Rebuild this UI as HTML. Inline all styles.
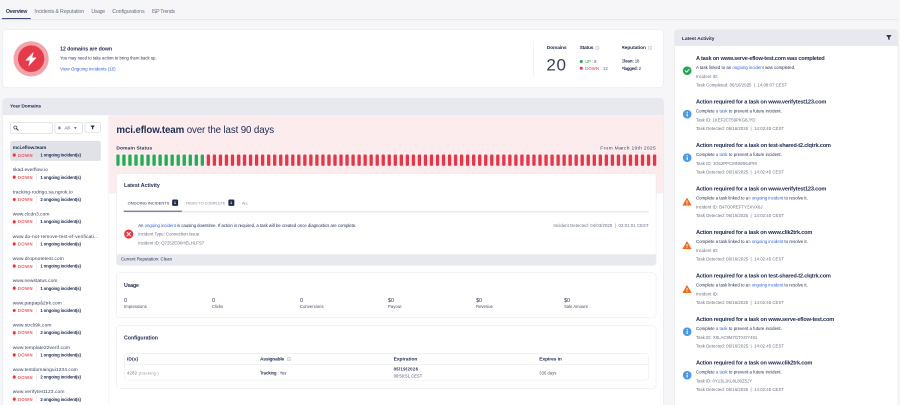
<!DOCTYPE html>
<html><head><meta charset="utf-8"><title>Domains Overview</title>
<style>
html,body{margin:0;padding:0;}
body{width:900px;height:405px;overflow:hidden;background:#f6f6f9;font-family:"Liberation Sans",sans-serif;}
#outer{position:absolute;left:-14px;top:-112px;width:1828px;height:1034px;transform:scale(0.5);transform-origin:0 0;will-change:transform;overflow:hidden;background:#f6f6f9;}
#root{position:absolute;left:28px;top:224px;width:2400px;height:1080px;transform:scale(0.75);transform-origin:0 0;overflow:hidden;background:#f6f6f9;}
.t{position:absolute;white-space:nowrap;}
.t b{font-weight:700;}
a{color:#2f5fd3;text-decoration:none;}
</style></head><body><div id="outer"><div id="root">
<div style="position:absolute;left:0.00px;top:50.80px;width:2394.00px;height:1.50px;background:#cfd2dc"></div>
<div style="position:absolute;left:5.30px;top:47.80px;width:76.70px;height:3.70px;background:#46547a"></div>
<div style="position:absolute;left:6.70px;top:78.30px;width:1762.50px;height:155.50px;background:#fff;border:1.4px solid #dcdee5;border-radius:9px;box-sizing:border-box"></div>
<div style="position:absolute;left:35.80px;top:109.50px;width:94.00px;height:94.00px;background:#f3a3aa;border-radius:50%"></div>
<div style="position:absolute;left:47.50px;top:121.20px;width:70.60px;height:70.60px;background:#e43c4a;border-radius:50%"></div>
<svg style="position:absolute;left:62.8px;top:134.5px" width="40" height="44" viewBox="-20 -22 40 44"><path d="M5.5 -16.5 L-14 3.6 L-2.4 3.6 L-6.5 18 L13 -2.8 L1.8 -2.8 Z" fill="#fff" stroke="#fff" stroke-width="1.5" stroke-linejoin="round"/></svg>
<div style="position:absolute;left:1422.70px;top:110.00px;width:1.00px;height:93.00px;background:#dcdde3"></div>
<svg style="position:absolute;left:1587.0px;top:121.8px" width="11.5" height="11.5" viewBox="0 0 12 12"><circle cx="6" cy="6" r="5.2" fill="none" stroke="#9fa4b3" stroke-width="1.3"/><rect x="5.4" y="5.2" width="1.2" height="3.6" fill="#9fa4b3"/><rect x="5.4" y="3" width="1.2" height="1.3" fill="#9fa4b3"/></svg>
<svg style="position:absolute;left:1727.5px;top:121.8px" width="11.5" height="11.5" viewBox="0 0 12 12"><circle cx="6" cy="6" r="5.2" fill="none" stroke="#9fa4b3" stroke-width="1.3"/><rect x="5.4" y="5.2" width="1.2" height="3.6" fill="#9fa4b3"/><rect x="5.4" y="3" width="1.2" height="1.3" fill="#9fa4b3"/></svg>
<div style="position:absolute;left:1545.90px;top:160.00px;width:8.00px;height:8.00px;background:#22a652;border-radius:50%"></div>
<div style="position:absolute;left:1545.90px;top:178.40px;width:8.00px;height:8.00px;background:#e5383f;border-radius:50%"></div>
<div style="position:absolute;left:6.70px;top:261.60px;width:1763.00px;height:900.00px;background:#fff;border:1.4px solid #d6d8e0;border-radius:9px;box-sizing:border-box;overflow:hidden"></div>
<div style="position:absolute;left:7.7px;top:262.6px;width:1761px;height:44px;background:#e8e9ee;border-radius:8px 8px 0 0"></div>
<div style="position:absolute;left:290.40px;top:306.60px;width:1478.50px;height:209.90px;background:#fcecee"></div>
<div style="position:absolute;left:288.50px;top:306.60px;width:1.50px;height:800.00px;background:#e9eaef"></div>
<div style="position:absolute;left:27.00px;top:326.00px;width:114.00px;height:29.70px;background:#fff;border:1.3px solid #b6bbc8;border-radius:5px;box-sizing:border-box"></div>
<svg style="position:absolute;left:35px;top:333.5px" width="15" height="15" viewBox="0 0 15 15"><circle cx="6" cy="6" r="4.2" fill="none" stroke="#2a3553" stroke-width="1.7"/><path d="M9 9 L13.5 13.5" stroke="#2a3553" stroke-width="2.4" stroke-linecap="round"/></svg>
<div style="position:absolute;left:146.00px;top:326.00px;width:75.30px;height:29.70px;background:#fff;border:1.3px solid #b6bbc8;border-radius:5px;box-sizing:border-box"></div>
<div style="position:absolute;left:155.00px;top:337.30px;width:7.40px;height:7.40px;background:#8d92a3;border-radius:50%"></div>
<svg style="position:absolute;left:197px;top:338.5px" width="8" height="5" viewBox="0 0 8 5"><path d="M0 0 L8 0 L4 5 Z" fill="#4a5470"/></svg>
<div style="position:absolute;left:226.00px;top:326.00px;width:42.80px;height:26.80px;background:#fff;border:1.3px solid #b6bbc8;border-radius:5px;box-sizing:border-box"></div>
<svg style="position:absolute;left:241.2px;top:333.5px" width="12" height="12" viewBox="0 0 12 12"><path d="M0.4 0.6 L11.6 0.6 L11.6 1.5 L7.5 5.8 L7.5 11.6 L4.5 9.6 L4.5 5.8 L0.4 1.5 Z" fill="#1f2a4a"/></svg>
<div style="position:absolute;left:27.00px;top:376.30px;width:242.00px;height:52.80px;background:#e0e2e8;border-radius:6px"></div>
<div style="position:absolute;left:33.50px;top:409.20px;width:8.80px;height:8.80px;background:#e5383f;border-radius:50%"></div>
<div style="position:absolute;left:97.00px;top:404.60px;width:1.00px;height:18.00px;background:#d3d5dd"></div>
<div style="position:absolute;left:33.50px;top:468.40px;width:8.80px;height:8.80px;background:#e5383f;border-radius:50%"></div>
<div style="position:absolute;left:97.00px;top:463.80px;width:1.00px;height:18.00px;background:#d3d5dd"></div>
<div style="position:absolute;left:33.50px;top:527.60px;width:8.80px;height:8.80px;background:#e5383f;border-radius:50%"></div>
<div style="position:absolute;left:97.00px;top:523.00px;width:1.00px;height:18.00px;background:#d3d5dd"></div>
<div style="position:absolute;left:33.50px;top:586.80px;width:8.80px;height:8.80px;background:#e5383f;border-radius:50%"></div>
<div style="position:absolute;left:97.00px;top:582.20px;width:1.00px;height:18.00px;background:#d3d5dd"></div>
<div style="position:absolute;left:33.50px;top:646.00px;width:8.80px;height:8.80px;background:#e5383f;border-radius:50%"></div>
<div style="position:absolute;left:97.00px;top:641.40px;width:1.00px;height:18.00px;background:#d3d5dd"></div>
<div style="position:absolute;left:33.50px;top:705.20px;width:8.80px;height:8.80px;background:#e5383f;border-radius:50%"></div>
<div style="position:absolute;left:97.00px;top:700.60px;width:1.00px;height:18.00px;background:#d3d5dd"></div>
<div style="position:absolute;left:33.50px;top:764.40px;width:8.80px;height:8.80px;background:#e5383f;border-radius:50%"></div>
<div style="position:absolute;left:97.00px;top:759.80px;width:1.00px;height:18.00px;background:#d3d5dd"></div>
<div style="position:absolute;left:33.50px;top:823.60px;width:8.80px;height:8.80px;background:#e5383f;border-radius:50%"></div>
<div style="position:absolute;left:97.00px;top:819.00px;width:1.00px;height:18.00px;background:#d3d5dd"></div>
<div style="position:absolute;left:33.50px;top:882.80px;width:8.80px;height:8.80px;background:#e5383f;border-radius:50%"></div>
<div style="position:absolute;left:97.00px;top:878.20px;width:1.00px;height:18.00px;background:#d3d5dd"></div>
<div style="position:absolute;left:33.50px;top:942.00px;width:8.80px;height:8.80px;background:#e5383f;border-radius:50%"></div>
<div style="position:absolute;left:97.00px;top:937.40px;width:1.00px;height:18.00px;background:#d3d5dd"></div>
<div style="position:absolute;left:33.50px;top:1001.20px;width:8.80px;height:8.80px;background:#e5383f;border-radius:50%"></div>
<div style="position:absolute;left:97.00px;top:996.60px;width:1.00px;height:18.00px;background:#d3d5dd"></div>
<div style="position:absolute;left:33.50px;top:1060.40px;width:8.80px;height:8.80px;background:#e5383f;border-radius:50%"></div>
<div style="position:absolute;left:97.00px;top:1055.80px;width:1.00px;height:18.00px;background:#d3d5dd"></div>
<svg style="position:absolute;left:310.4px;top:412.3px" width="1442" height="31"><rect x="0.00" y="0" width="8.9" height="30.3" rx="3.2" fill="#22ad57"/><rect x="16.08" y="0" width="8.9" height="30.3" rx="3.2" fill="#22ad57"/><rect x="32.16" y="0" width="8.9" height="30.3" rx="3.2" fill="#22ad57"/><rect x="48.24" y="0" width="8.9" height="30.3" rx="3.2" fill="#22ad57"/><rect x="64.32" y="0" width="8.9" height="30.3" rx="3.2" fill="#22ad57"/><rect x="80.40" y="0" width="8.9" height="30.3" rx="3.2" fill="#22ad57"/><rect x="96.48" y="0" width="8.9" height="30.3" rx="3.2" fill="#22ad57"/><rect x="112.56" y="0" width="8.9" height="30.3" rx="3.2" fill="#22ad57"/><rect x="128.64" y="0" width="8.9" height="30.3" rx="3.2" fill="#22ad57"/><rect x="144.72" y="0" width="8.9" height="30.3" rx="3.2" fill="#22ad57"/><rect x="160.80" y="0" width="8.9" height="30.3" rx="3.2" fill="#22ad57"/><rect x="176.88" y="0" width="8.9" height="30.3" rx="3.2" fill="#22ad57"/><rect x="192.96" y="0" width="8.9" height="30.3" rx="3.2" fill="#22ad57"/><rect x="209.04" y="0" width="8.9" height="30.3" rx="3.2" fill="#22ad57"/><rect x="225.12" y="0" width="8.9" height="30.3" rx="3.2" fill="#22ad57"/><rect x="241.20" y="0" width="8.9" height="30.3" rx="3.2" fill="#e4374a"/><rect x="257.28" y="0" width="8.9" height="30.3" rx="3.2" fill="#e4374a"/><rect x="273.36" y="0" width="8.9" height="30.3" rx="3.2" fill="#e4374a"/><rect x="289.44" y="0" width="8.9" height="30.3" rx="3.2" fill="#e4374a"/><rect x="305.52" y="0" width="8.9" height="30.3" rx="3.2" fill="#e4374a"/><rect x="321.60" y="0" width="8.9" height="30.3" rx="3.2" fill="#e4374a"/><rect x="337.68" y="0" width="8.9" height="30.3" rx="3.2" fill="#e4374a"/><rect x="353.76" y="0" width="8.9" height="30.3" rx="3.2" fill="#e4374a"/><rect x="369.84" y="0" width="8.9" height="30.3" rx="3.2" fill="#e4374a"/><rect x="385.92" y="0" width="8.9" height="30.3" rx="3.2" fill="#e4374a"/><rect x="402.00" y="0" width="8.9" height="30.3" rx="3.2" fill="#e4374a"/><rect x="418.08" y="0" width="8.9" height="30.3" rx="3.2" fill="#e4374a"/><rect x="434.16" y="0" width="8.9" height="30.3" rx="3.2" fill="#e4374a"/><rect x="450.24" y="0" width="8.9" height="30.3" rx="3.2" fill="#e4374a"/><rect x="466.32" y="0" width="8.9" height="30.3" rx="3.2" fill="#e4374a"/><rect x="482.40" y="0" width="8.9" height="30.3" rx="3.2" fill="#e4374a"/><rect x="498.48" y="0" width="8.9" height="30.3" rx="3.2" fill="#e4374a"/><rect x="514.56" y="0" width="8.9" height="30.3" rx="3.2" fill="#e4374a"/><rect x="530.64" y="0" width="8.9" height="30.3" rx="3.2" fill="#e4374a"/><rect x="546.72" y="0" width="8.9" height="30.3" rx="3.2" fill="#e4374a"/><rect x="562.80" y="0" width="8.9" height="30.3" rx="3.2" fill="#e4374a"/><rect x="578.88" y="0" width="8.9" height="30.3" rx="3.2" fill="#e4374a"/><rect x="594.96" y="0" width="8.9" height="30.3" rx="3.2" fill="#e4374a"/><rect x="611.04" y="0" width="8.9" height="30.3" rx="3.2" fill="#e4374a"/><rect x="627.12" y="0" width="8.9" height="30.3" rx="3.2" fill="#e4374a"/><rect x="643.20" y="0" width="8.9" height="30.3" rx="3.2" fill="#e4374a"/><rect x="659.28" y="0" width="8.9" height="30.3" rx="3.2" fill="#e4374a"/><rect x="675.36" y="0" width="8.9" height="30.3" rx="3.2" fill="#e4374a"/><rect x="691.44" y="0" width="8.9" height="30.3" rx="3.2" fill="#e4374a"/><rect x="707.52" y="0" width="8.9" height="30.3" rx="3.2" fill="#e4374a"/><rect x="723.60" y="0" width="8.9" height="30.3" rx="3.2" fill="#e4374a"/><rect x="739.68" y="0" width="8.9" height="30.3" rx="3.2" fill="#e4374a"/><rect x="755.76" y="0" width="8.9" height="30.3" rx="3.2" fill="#e4374a"/><rect x="771.84" y="0" width="8.9" height="30.3" rx="3.2" fill="#e4374a"/><rect x="787.92" y="0" width="8.9" height="30.3" rx="3.2" fill="#e4374a"/><rect x="804.00" y="0" width="8.9" height="30.3" rx="3.2" fill="#e4374a"/><rect x="820.08" y="0" width="8.9" height="30.3" rx="3.2" fill="#e4374a"/><rect x="836.16" y="0" width="8.9" height="30.3" rx="3.2" fill="#e4374a"/><rect x="852.24" y="0" width="8.9" height="30.3" rx="3.2" fill="#e4374a"/><rect x="868.32" y="0" width="8.9" height="30.3" rx="3.2" fill="#e4374a"/><rect x="884.40" y="0" width="8.9" height="30.3" rx="3.2" fill="#e4374a"/><rect x="900.48" y="0" width="8.9" height="30.3" rx="3.2" fill="#e4374a"/><rect x="916.56" y="0" width="8.9" height="30.3" rx="3.2" fill="#e4374a"/><rect x="932.64" y="0" width="8.9" height="30.3" rx="3.2" fill="#e4374a"/><rect x="948.72" y="0" width="8.9" height="30.3" rx="3.2" fill="#e4374a"/><rect x="964.80" y="0" width="8.9" height="30.3" rx="3.2" fill="#e4374a"/><rect x="980.88" y="0" width="8.9" height="30.3" rx="3.2" fill="#e4374a"/><rect x="996.96" y="0" width="8.9" height="30.3" rx="3.2" fill="#e4374a"/><rect x="1013.04" y="0" width="8.9" height="30.3" rx="3.2" fill="#e4374a"/><rect x="1029.12" y="0" width="8.9" height="30.3" rx="3.2" fill="#e4374a"/><rect x="1045.20" y="0" width="8.9" height="30.3" rx="3.2" fill="#e4374a"/><rect x="1061.28" y="0" width="8.9" height="30.3" rx="3.2" fill="#e4374a"/><rect x="1077.36" y="0" width="8.9" height="30.3" rx="3.2" fill="#e4374a"/><rect x="1093.44" y="0" width="8.9" height="30.3" rx="3.2" fill="#e4374a"/><rect x="1109.52" y="0" width="8.9" height="30.3" rx="3.2" fill="#e4374a"/><rect x="1125.60" y="0" width="8.9" height="30.3" rx="3.2" fill="#e4374a"/><rect x="1141.68" y="0" width="8.9" height="30.3" rx="3.2" fill="#e4374a"/><rect x="1157.76" y="0" width="8.9" height="30.3" rx="3.2" fill="#e4374a"/><rect x="1173.84" y="0" width="8.9" height="30.3" rx="3.2" fill="#e4374a"/><rect x="1189.92" y="0" width="8.9" height="30.3" rx="3.2" fill="#e4374a"/><rect x="1206.00" y="0" width="8.9" height="30.3" rx="3.2" fill="#e4374a"/><rect x="1222.08" y="0" width="8.9" height="30.3" rx="3.2" fill="#e4374a"/><rect x="1238.16" y="0" width="8.9" height="30.3" rx="3.2" fill="#e4374a"/><rect x="1254.24" y="0" width="8.9" height="30.3" rx="3.2" fill="#e4374a"/><rect x="1270.32" y="0" width="8.9" height="30.3" rx="3.2" fill="#e4374a"/><rect x="1286.40" y="0" width="8.9" height="30.3" rx="3.2" fill="#e4374a"/><rect x="1302.48" y="0" width="8.9" height="30.3" rx="3.2" fill="#e4374a"/><rect x="1318.56" y="0" width="8.9" height="30.3" rx="3.2" fill="#e4374a"/><rect x="1334.64" y="0" width="8.9" height="30.3" rx="3.2" fill="#e4374a"/><rect x="1350.72" y="0" width="8.9" height="30.3" rx="3.2" fill="#e4374a"/><rect x="1366.80" y="0" width="8.9" height="30.3" rx="3.2" fill="#e4374a"/><rect x="1382.88" y="0" width="8.9" height="30.3" rx="3.2" fill="#e4374a"/><rect x="1398.96" y="0" width="8.9" height="30.3" rx="3.2" fill="#e4374a"/><rect x="1415.04" y="0" width="8.9" height="30.3" rx="3.2" fill="#e4374a"/><rect x="1431.12" y="0" width="8.9" height="30.3" rx="3.2" fill="#e4374a"/></svg>
<div style="position:absolute;left:310.40px;top:461.90px;width:1439.20px;height:245.80px;background:#fff;border:1.4px solid #dcdee5;border-radius:8px;box-sizing:border-box;overflow:hidden"></div>
<div style="position:absolute;left:311.40px;top:678.40px;width:1437.20px;height:28.30px;background:#e8e9ee;border-radius:0 0 7px 7px"></div>
<div style="position:absolute;left:458.70px;top:531.60px;width:16.00px;height:17.00px;background:#1f2d50;border-radius:3.5px"></div>
<div style="position:absolute;left:608.50px;top:531.60px;width:16.00px;height:17.00px;background:#1f2d50;border-radius:3.5px"></div>
<div style="position:absolute;left:329.60px;top:564.00px;width:1400.00px;height:1.60px;background:#cfd2dc"></div>
<div style="position:absolute;left:329.60px;top:561.60px;width:155.70px;height:2.80px;background:#2a3553"></div>
<svg style="position:absolute;left:331.2px;top:612.3px" width="24.4" height="24.4" viewBox="0 0 23 23"><circle cx="11.5" cy="11.5" r="11.5" fill="#e5383f"/><path d="M7.3 7.3 L15.7 15.7 M15.7 7.3 L7.3 15.7" stroke="#fff" stroke-width="2.6" stroke-linecap="round"/></svg>
<div style="position:absolute;left:310.40px;top:726.70px;width:1439.20px;height:121.00px;background:#fff;border:1.4px solid #dcdee5;border-radius:8px;box-sizing:border-box;overflow:hidden"></div>
<div style="position:absolute;left:310.40px;top:868.30px;width:1439.20px;height:167.40px;background:#fff;border:1.4px solid #dcdee5;border-radius:8px;box-sizing:border-box;overflow:hidden"></div>
<div style="position:absolute;left:330.70px;top:942.40px;width:1398.60px;height:72.00px;background:#fff;border:1.4px solid #dcdee5;border-radius:7px;box-sizing:border-box"></div>
<div style="position:absolute;left:331.70px;top:971.20px;width:1396.60px;height:1.00px;background:#dcdee5"></div>
<svg style="position:absolute;left:764.8px;top:951.5px" width="11.5" height="11.5" viewBox="0 0 12 12"><circle cx="6" cy="6" r="5.2" fill="none" stroke="#9fa4b3" stroke-width="1.3"/><rect x="5.4" y="5.2" width="1.2" height="3.6" fill="#9fa4b3"/><rect x="5.4" y="3" width="1.2" height="1.3" fill="#9fa4b3"/></svg>
<div style="position:absolute;left:1798.40px;top:78.70px;width:596.50px;height:1100.00px;background:#fff;border:1.4px solid #d6d8e0;border-radius:9px;box-sizing:border-box"></div>
<div style="position:absolute;left:1799.4px;top:79.7px;width:594.5px;height:43.8px;background:#e8e9ee;border-radius:8px 8px 0 0"></div>
<svg style="position:absolute;left:2363.2px;top:93.3px" width="14.5" height="14.5" viewBox="0 0 12 12"><path d="M0.4 0.6 L11.6 0.6 L11.6 1.5 L7.5 5.8 L7.5 11.6 L4.5 9.6 L4.5 5.8 L0.4 1.5 Z" fill="#1f2a4a"/></svg>
<svg style="position:absolute;left:1820.7px;top:177.1px" width="23" height="23" viewBox="0 0 23 23"><circle cx="11.5" cy="11.5" r="11.5" fill="#22a652"/><path d="M6.5 11.8 L10 15.3 L16.5 8.2" stroke="#fff" stroke-width="2.6" fill="none" stroke-linecap="round" stroke-linejoin="round"/></svg>
<svg style="position:absolute;left:1820.7px;top:293.15000000000003px" width="23" height="23" viewBox="0 0 23 23"><circle cx="11.5" cy="11.5" r="11.5" fill="#4a98e8"/><rect x="10" y="9.8" width="3" height="8" rx="0.8" fill="#fff"/><circle cx="11.5" cy="6.4" r="1.8" fill="#fff"/></svg>
<svg style="position:absolute;left:1820.7px;top:409.20000000000005px" width="23" height="23" viewBox="0 0 23 23"><circle cx="11.5" cy="11.5" r="11.5" fill="#4a98e8"/><rect x="10" y="9.8" width="3" height="8" rx="0.8" fill="#fff"/><circle cx="11.5" cy="6.4" r="1.8" fill="#fff"/></svg>
<svg style="position:absolute;left:1820.2px;top:527.4px" width="24" height="22" viewBox="0 0 25 23"><path d="M12.5 1.8 L23.8 21.3 L1.2 21.3 Z" fill="#f06a1f" stroke="#f06a1f" stroke-width="2.2" stroke-linejoin="round"/><rect x="11.3" y="8" width="2.4" height="7.3" fill="#fff"/><rect x="11.3" y="16.8" width="2.4" height="2.4" fill="#fff"/></svg>
<svg style="position:absolute;left:1820.2px;top:643.4px" width="24" height="22" viewBox="0 0 25 23"><path d="M12.5 1.8 L23.8 21.3 L1.2 21.3 Z" fill="#f06a1f" stroke="#f06a1f" stroke-width="2.2" stroke-linejoin="round"/><rect x="11.3" y="8" width="2.4" height="7.3" fill="#fff"/><rect x="11.3" y="16.8" width="2.4" height="2.4" fill="#fff"/></svg>
<svg style="position:absolute;left:1820.2px;top:759.5px" width="24" height="22" viewBox="0 0 25 23"><path d="M12.5 1.8 L23.8 21.3 L1.2 21.3 Z" fill="#f06a1f" stroke="#f06a1f" stroke-width="2.2" stroke-linejoin="round"/><rect x="11.3" y="8" width="2.4" height="7.3" fill="#fff"/><rect x="11.3" y="16.8" width="2.4" height="2.4" fill="#fff"/></svg>
<svg style="position:absolute;left:1820.7px;top:873.4px" width="23" height="23" viewBox="0 0 23 23"><circle cx="11.5" cy="11.5" r="11.5" fill="#4a98e8"/><rect x="10" y="9.8" width="3" height="8" rx="0.8" fill="#fff"/><circle cx="11.5" cy="6.4" r="1.8" fill="#fff"/></svg>
<svg style="position:absolute;left:1820.7px;top:989.45px" width="23" height="23" viewBox="0 0 23 23"><circle cx="11.5" cy="11.5" r="11.5" fill="#4a98e8"/><rect x="10" y="9.8" width="3" height="8" rx="0.8" fill="#fff"/><circle cx="11.5" cy="6.4" r="1.8" fill="#fff"/></svg>
<div class="t" style="left:15.70px;top:20.60px;font-size:14px;line-height:16.80px;font-weight:700;color:#2a3553;letter-spacing:-0.746px;">Overview</div>
<div class="t" style="left:91.70px;top:20.60px;font-size:14px;line-height:16.80px;font-weight:400;color:#6b7189;letter-spacing:-0.390px;">Incidents &amp; Reputation</div>
<div class="t" style="left:243.70px;top:20.60px;font-size:14px;line-height:16.80px;font-weight:400;color:#6b7189;letter-spacing:-0.934px;">Usage</div>
<div class="t" style="left:299.20px;top:20.60px;font-size:14px;line-height:16.80px;font-weight:400;color:#6b7189;letter-spacing:-0.299px;">Configurations</div>
<div class="t" style="left:404.50px;top:20.60px;font-size:14px;line-height:16.80px;font-weight:400;color:#6b7189;letter-spacing:-0.762px;">ISP Trends</div>
<div class="t" style="left:160.30px;top:122.30px;font-size:14px;line-height:16.80px;font-weight:700;color:#232f54;letter-spacing:-0.209px;">12 domains are down</div>
<div class="t" style="left:160.30px;top:148.90px;font-size:11px;line-height:13.20px;font-weight:400;color:#232f54;letter-spacing:0.146px;">You may need to take action to bring them back up.</div>
<div class="t" style="left:160.30px;top:177.40px;font-size:12px;line-height:14.40px;font-weight:400;color:#2f5fd3;letter-spacing:-0.094px;"><a>View Ongoing Incidents (16)</a></div>
<div class="t" style="left:1458.10px;top:119.30px;font-size:13px;line-height:15.60px;font-weight:700;color:#232f54;letter-spacing:-0.372px;">Domains</div>
<div class="t" style="left:1457.00px;top:146.30px;font-size:45.5px;line-height:54.60px;font-weight:400;color:#36415f;letter-spacing:1.688px;">20</div>
<div class="t" style="left:1545.60px;top:119.30px;font-size:13px;line-height:15.60px;font-weight:700;color:#232f54;letter-spacing:-0.572px;">Status</div>
<div class="t" style="left:1656.50px;top:119.30px;font-size:13px;line-height:15.60px;font-weight:700;color:#232f54;letter-spacing:-0.199px;">Reputation</div>
<div class="t" style="left:1560.50px;top:157.70px;font-size:11.5px;line-height:13.80px;font-weight:400;color:#4a5470;letter-spacing:-0.311px;"><span style="color:#22a652">UP</span> : 8</div>
<div class="t" style="left:1560.50px;top:175.90px;font-size:11.5px;line-height:13.80px;font-weight:400;color:#4a5470;letter-spacing:0.165px;"><span style="color:#e5383f">DOWN</span> : 12</div>
<div class="t" style="left:1656.50px;top:157.10px;font-size:11.5px;line-height:13.80px;font-weight:400;color:#232f54;letter-spacing:-0.317px;"><b>Clean:</b> 18</div>
<div class="t" style="left:1656.50px;top:175.50px;font-size:11.5px;line-height:13.80px;font-weight:400;color:#232f54;letter-spacing:-0.502px;"><b>Flagged:</b> 2</div>
<div class="t" style="left:26.70px;top:275.40px;font-size:13px;line-height:15.60px;font-weight:700;color:#232f54;letter-spacing:-0.381px;">Your Domains</div>
<div class="t" style="left:172.00px;top:334.10px;font-size:12px;line-height:14.40px;font-weight:400;color:#4f566e;letter-spacing:0.085px;">All</div>
<div class="t" style="left:33.90px;top:385.20px;font-size:13px;line-height:15.60px;font-weight:700;color:#232f54;letter-spacing:-0.223px;">mci.eflow.team</div>
<div class="t" style="left:48.00px;top:407.50px;font-size:11px;line-height:13.20px;font-weight:400;color:#e5383f;letter-spacing:1.218px;-webkit-text-stroke:0.25px #e5383f;">DOWN</div>
<div class="t" style="left:107.50px;top:407.40px;font-size:11.5px;line-height:13.80px;font-weight:700;color:#232f54;letter-spacing:-0.394px;">1 ongoing incident(s)</div>
<div class="t" style="left:33.90px;top:444.40px;font-size:13px;line-height:15.60px;font-weight:400;color:#364160;letter-spacing:0.050px;">skad.everflow.io</div>
<div class="t" style="left:48.00px;top:466.70px;font-size:11px;line-height:13.20px;font-weight:400;color:#e5383f;letter-spacing:1.218px;-webkit-text-stroke:0.25px #e5383f;">DOWN</div>
<div class="t" style="left:107.50px;top:466.60px;font-size:11.5px;line-height:13.80px;font-weight:700;color:#232f54;letter-spacing:-0.394px;">1 ongoing incident(s)</div>
<div class="t" style="left:33.90px;top:503.60px;font-size:13px;line-height:15.60px;font-weight:400;color:#364160;letter-spacing:0.088px;">tracking-rodrigo.sa.ngrok.io</div>
<div class="t" style="left:48.00px;top:525.90px;font-size:11px;line-height:13.20px;font-weight:400;color:#e5383f;letter-spacing:1.218px;-webkit-text-stroke:0.25px #e5383f;">DOWN</div>
<div class="t" style="left:107.50px;top:525.80px;font-size:11.5px;line-height:13.80px;font-weight:700;color:#232f54;letter-spacing:-0.394px;">2 ongoing incident(s)</div>
<div class="t" style="left:33.90px;top:562.80px;font-size:13px;line-height:15.60px;font-weight:400;color:#364160;letter-spacing:0.078px;">www.clcdn3.com</div>
<div class="t" style="left:48.00px;top:585.10px;font-size:11px;line-height:13.20px;font-weight:400;color:#e5383f;letter-spacing:1.218px;-webkit-text-stroke:0.25px #e5383f;">DOWN</div>
<div class="t" style="left:107.50px;top:585.00px;font-size:11.5px;line-height:13.80px;font-weight:700;color:#232f54;letter-spacing:-0.394px;">1 ongoing incident(s)</div>
<div class="t" style="left:33.90px;top:622.00px;font-size:13px;line-height:15.60px;font-weight:400;color:#364160;letter-spacing:0.233px;">www.do-not-remove-test-ef-verificati...</div>
<div class="t" style="left:48.00px;top:644.30px;font-size:11px;line-height:13.20px;font-weight:400;color:#e5383f;letter-spacing:1.218px;-webkit-text-stroke:0.25px #e5383f;">DOWN</div>
<div class="t" style="left:107.50px;top:644.20px;font-size:11.5px;line-height:13.80px;font-weight:700;color:#232f54;letter-spacing:-0.394px;">1 ongoing incident(s)</div>
<div class="t" style="left:33.90px;top:681.20px;font-size:13px;line-height:15.60px;font-weight:400;color:#364160;letter-spacing:0.244px;">www.dropnotetest.com</div>
<div class="t" style="left:48.00px;top:703.50px;font-size:11px;line-height:13.20px;font-weight:400;color:#e5383f;letter-spacing:1.218px;-webkit-text-stroke:0.25px #e5383f;">DOWN</div>
<div class="t" style="left:107.50px;top:703.40px;font-size:11.5px;line-height:13.80px;font-weight:700;color:#232f54;letter-spacing:-0.394px;">1 ongoing incident(s)</div>
<div class="t" style="left:33.90px;top:740.40px;font-size:13px;line-height:15.60px;font-weight:400;color:#364160;letter-spacing:0.090px;">www.newstatus.com</div>
<div class="t" style="left:48.00px;top:762.70px;font-size:11px;line-height:13.20px;font-weight:400;color:#e5383f;letter-spacing:1.218px;-webkit-text-stroke:0.25px #e5383f;">DOWN</div>
<div class="t" style="left:107.50px;top:762.60px;font-size:11.5px;line-height:13.80px;font-weight:700;color:#232f54;letter-spacing:-0.394px;">1 ongoing incident(s)</div>
<div class="t" style="left:33.90px;top:799.60px;font-size:13px;line-height:15.60px;font-weight:400;color:#364160;letter-spacing:0.082px;">www.pæpøpå2trk.com</div>
<div class="t" style="left:48.00px;top:821.90px;font-size:11px;line-height:13.20px;font-weight:400;color:#e5383f;letter-spacing:1.218px;-webkit-text-stroke:0.25px #e5383f;">DOWN</div>
<div class="t" style="left:107.50px;top:821.80px;font-size:11.5px;line-height:13.80px;font-weight:700;color:#232f54;letter-spacing:-0.394px;">1 ongoing incident(s)</div>
<div class="t" style="left:33.90px;top:858.80px;font-size:13px;line-height:15.60px;font-weight:400;color:#364160;letter-spacing:0.238px;">www.strcli9k.com</div>
<div class="t" style="left:48.00px;top:881.10px;font-size:11px;line-height:13.20px;font-weight:400;color:#e5383f;letter-spacing:1.218px;-webkit-text-stroke:0.25px #e5383f;">DOWN</div>
<div class="t" style="left:107.50px;top:881.00px;font-size:11.5px;line-height:13.80px;font-weight:700;color:#232f54;letter-spacing:-0.394px;">2 ongoing incident(s)</div>
<div class="t" style="left:33.90px;top:918.00px;font-size:13px;line-height:15.60px;font-weight:400;color:#364160;letter-spacing:0.199px;">www.template22verif.com</div>
<div class="t" style="left:48.00px;top:940.30px;font-size:11px;line-height:13.20px;font-weight:400;color:#e5383f;letter-spacing:1.218px;-webkit-text-stroke:0.25px #e5383f;">DOWN</div>
<div class="t" style="left:107.50px;top:940.20px;font-size:11.5px;line-height:13.80px;font-weight:700;color:#232f54;letter-spacing:-0.394px;">1 ongoing incident(s)</div>
<div class="t" style="left:33.90px;top:977.20px;font-size:13px;line-height:15.60px;font-weight:400;color:#364160;letter-spacing:0.180px;">www.testdomaingui1234.com</div>
<div class="t" style="left:48.00px;top:999.50px;font-size:11px;line-height:13.20px;font-weight:400;color:#e5383f;letter-spacing:1.218px;-webkit-text-stroke:0.25px #e5383f;">DOWN</div>
<div class="t" style="left:107.50px;top:999.40px;font-size:11.5px;line-height:13.80px;font-weight:700;color:#232f54;letter-spacing:-0.394px;">2 ongoing incident(s)</div>
<div class="t" style="left:33.90px;top:1036.40px;font-size:13px;line-height:15.60px;font-weight:400;color:#364160;letter-spacing:0.246px;">www.verifytest123.com</div>
<div class="t" style="left:48.00px;top:1058.70px;font-size:11px;line-height:13.20px;font-weight:400;color:#e5383f;letter-spacing:1.218px;-webkit-text-stroke:0.25px #e5383f;">DOWN</div>
<div class="t" style="left:107.50px;top:1058.60px;font-size:11.5px;line-height:13.80px;font-weight:700;color:#232f54;letter-spacing:-0.394px;">2 ongoing incident(s)</div>
<div class="t" style="left:310.40px;top:331.10px;font-size:26px;line-height:31.20px;font-weight:400;color:#232f54;letter-spacing:-0.341px;"><b>mci.eflow.team</b> over the last 90 days</div>
<div class="t" style="left:310.40px;top:387.40px;font-size:13px;line-height:15.60px;font-weight:700;color:#232f54;letter-spacing:0.345px;">Domain Status</div>
<div class="t" style="right:650.70px;top:387.40px;font-size:13px;line-height:15.60px;font-weight:400;color:#3f4966;letter-spacing:0.849px;">From March 19th 2025</div>
<div class="t" style="left:330.70px;top:485.50px;font-size:14px;line-height:16.80px;font-weight:700;color:#232f54;letter-spacing:0.014px;">Latest Activity</div>
<div class="t" style="left:340.30px;top:534.50px;font-size:10.5px;line-height:12.60px;font-weight:400;color:#232f54;letter-spacing:0.067px;">ONGOING INCIDENTS</div>
<div class="t" style="left:495.00px;top:534.50px;font-size:10.5px;line-height:12.60px;font-weight:400;color:#8a8fa0;letter-spacing:-0.321px;">TASKS TO COMPLETE</div>
<div class="t" style="left:645.30px;top:534.50px;font-size:10.5px;line-height:12.60px;font-weight:400;color:#8a8fa0;letter-spacing:-0.562px;">ALL</div>
<div class="t" style="left:464.00px;top:534.70px;font-size:9.5px;line-height:11.40px;font-weight:700;color:#fff;letter-spacing:0.000px;">1</div>
<div class="t" style="left:613.80px;top:534.70px;font-size:9.5px;line-height:11.40px;font-weight:700;color:#fff;letter-spacing:0.000px;">1</div>
<div class="t" style="left:368.50px;top:594.70px;font-size:11.5px;line-height:13.80px;font-weight:400;color:#232f54;letter-spacing:-0.042px;">An <a>ongoing incident</a> is causing downtime. If action is required, a task will be created once diagnostics are complete.</div>
<div class="t" style="left:368.50px;top:617.60px;font-size:11.5px;line-height:13.80px;font-weight:400;color:#6a7086;letter-spacing:-0.024px;">Incident Type: Connection Issue</div>
<div class="t" style="left:368.50px;top:642.40px;font-size:11.5px;line-height:13.80px;font-weight:400;color:#6a7086;letter-spacing:0.007px;">Incident ID: Q7252E0KHELHLFS7</div>
<div class="t" style="right:670.40px;top:594.70px;font-size:11.5px;line-height:13.80px;font-weight:400;color:#6a7086;letter-spacing:0.131px;">Incident Detected: 04/03/2025 &nbsp;|&nbsp; 02:01:01 CEST</div>
<div class="t" style="left:322.70px;top:684.80px;font-size:11.5px;line-height:13.80px;font-weight:400;color:#232f54;letter-spacing:0.096px;">Current Reputation: Clean</div>
<div class="t" style="left:330.70px;top:751.80px;font-size:14px;line-height:16.80px;font-weight:700;color:#232f54;letter-spacing:-0.566px;">Usage</div>
<div class="t" style="left:330.70px;top:791.60px;font-size:14px;line-height:16.80px;font-weight:400;color:#232f54;letter-spacing:0.000px;">0</div>
<div class="t" style="left:330.70px;top:811.00px;font-size:11px;line-height:13.20px;font-weight:400;color:#3f4966;letter-spacing:0.155px;">Impressions</div>
<div class="t" style="left:565.40px;top:791.60px;font-size:14px;line-height:16.80px;font-weight:400;color:#232f54;letter-spacing:0.000px;">0</div>
<div class="t" style="left:565.40px;top:811.00px;font-size:11px;line-height:13.20px;font-weight:400;color:#3f4966;letter-spacing:0.043px;">Clicks</div>
<div class="t" style="left:800.10px;top:791.60px;font-size:14px;line-height:16.80px;font-weight:400;color:#232f54;letter-spacing:0.000px;">0</div>
<div class="t" style="left:800.10px;top:811.00px;font-size:11px;line-height:13.20px;font-weight:400;color:#3f4966;letter-spacing:0.169px;">Conversions</div>
<div class="t" style="left:1034.80px;top:791.60px;font-size:14px;line-height:16.80px;font-weight:400;color:#232f54;letter-spacing:0.000px;">$0</div>
<div class="t" style="left:1034.80px;top:811.00px;font-size:11px;line-height:13.20px;font-weight:400;color:#3f4966;letter-spacing:0.342px;">Payout</div>
<div class="t" style="left:1269.50px;top:791.60px;font-size:14px;line-height:16.80px;font-weight:400;color:#232f54;letter-spacing:0.000px;">$0</div>
<div class="t" style="left:1269.50px;top:811.00px;font-size:11px;line-height:13.20px;font-weight:400;color:#3f4966;letter-spacing:0.122px;">Revenue</div>
<div class="t" style="left:1504.20px;top:791.60px;font-size:14px;line-height:16.80px;font-weight:400;color:#232f54;letter-spacing:0.000px;">$0</div>
<div class="t" style="left:1504.20px;top:811.00px;font-size:11px;line-height:13.20px;font-weight:400;color:#3f4966;letter-spacing:0.057px;">Sale Amount</div>
<div class="t" style="left:330.70px;top:892.30px;font-size:14px;line-height:16.80px;font-weight:700;color:#232f54;letter-spacing:-0.090px;">Configuration</div>
<div class="t" style="left:338.70px;top:948.50px;font-size:13px;line-height:15.60px;font-weight:700;color:#232f54;letter-spacing:0.082px;">ID(s)</div>
<div class="t" style="left:693.30px;top:948.50px;font-size:13px;line-height:15.60px;font-weight:700;color:#232f54;letter-spacing:-0.536px;">Assignable</div>
<div class="t" style="left:1049.60px;top:948.50px;font-size:13px;line-height:15.60px;font-weight:700;color:#232f54;letter-spacing:-0.008px;">Expiration</div>
<div class="t" style="left:1438.10px;top:948.50px;font-size:13px;line-height:15.60px;font-weight:700;color:#232f54;letter-spacing:-0.214px;">Expires in</div>
<div class="t" style="left:338.70px;top:987.50px;font-size:11px;line-height:13.20px;font-weight:400;color:#6a7086;letter-spacing:0.679px;">4282</div>
<div class="t" style="left:370.00px;top:987.80px;font-size:10.5px;line-height:12.60px;font-weight:400;color:#878c9d;letter-spacing:0.665px;">(tracking )</div>
<div class="t" style="left:693.30px;top:987.50px;font-size:11px;line-height:13.20px;font-weight:400;color:#232f54;letter-spacing:-0.162px;"><b>Tracking</b> : Yes</div>
<div class="t" style="left:1049.60px;top:977.90px;font-size:11.5px;line-height:13.80px;font-weight:700;color:#232f54;letter-spacing:0.834px;">05/19/2026</div>
<div class="t" style="left:1049.60px;top:996.10px;font-size:11px;line-height:13.20px;font-weight:400;color:#4a5470;letter-spacing:0.091px;">00:50:51 CEST</div>
<div class="t" style="left:1438.10px;top:987.50px;font-size:11px;line-height:13.20px;font-weight:400;color:#4a5470;letter-spacing:0.155px;">336 days</div>
<div class="t" style="left:1818.40px;top:94.20px;font-size:13px;line-height:15.60px;font-weight:700;color:#232f54;letter-spacing:-0.119px;">Latest Activity</div>
<div class="t" style="left:1856.00px;top:146.00px;font-size:15px;line-height:18.00px;font-weight:700;color:#232f54;letter-spacing:-0.583px;">A task on www.serve-eflow-test.com was completed</div>
<div class="t" style="left:1856.00px;top:174.10px;font-size:11.5px;line-height:13.80px;font-weight:400;color:#232f54;letter-spacing:0.021px;">A task linked to an <a>ongoing incident</a> was completed.</div>
<div class="t" style="left:1856.00px;top:197.90px;font-size:11.5px;line-height:13.80px;font-weight:400;color:#6a7086;letter-spacing:0.111px;">Incident ID:</div>
<div class="t" style="left:1856.00px;top:220.40px;font-size:11.5px;line-height:13.80px;font-weight:400;color:#6a7086;letter-spacing:0.054px;">Task Completed: 06/16/2025 &nbsp;|&nbsp; 14:08:07 CEST</div>
<div class="t" style="left:1856.00px;top:262.05px;font-size:15px;line-height:18.00px;font-weight:700;color:#232f54;letter-spacing:-0.524px;">Action required for a task on www.verifytest123.com</div>
<div class="t" style="left:1856.00px;top:290.15px;font-size:11.5px;line-height:13.80px;font-weight:400;color:#232f54;letter-spacing:0.074px;">Complete <a>a task</a> to prevent a future incident.</div>
<div class="t" style="left:1856.00px;top:313.95px;font-size:11.5px;line-height:13.80px;font-weight:400;color:#6a7086;letter-spacing:-0.073px;">Task ID: 1KEF2CT59PKG8JYD</div>
<div class="t" style="left:1856.00px;top:336.45px;font-size:11.5px;line-height:13.80px;font-weight:400;color:#6a7086;letter-spacing:0.081px;">Task Detected: 06/16/2025 &nbsp;|&nbsp; 14:02:45 CEST</div>
<div class="t" style="left:1856.00px;top:378.10px;font-size:15px;line-height:18.00px;font-weight:700;color:#232f54;letter-spacing:-0.514px;">Action required for a task on test-shared-t2.clqtrk.com</div>
<div class="t" style="left:1856.00px;top:406.20px;font-size:11.5px;line-height:13.80px;font-weight:400;color:#232f54;letter-spacing:0.074px;">Complete <a>a task</a> to prevent a future incident.</div>
<div class="t" style="left:1856.00px;top:430.00px;font-size:11.5px;line-height:13.80px;font-weight:400;color:#6a7086;letter-spacing:0.037px;">Task ID: JG52PPCMNW564PI8</div>
<div class="t" style="left:1856.00px;top:452.50px;font-size:11.5px;line-height:13.80px;font-weight:400;color:#6a7086;letter-spacing:0.081px;">Task Detected: 06/16/2025 &nbsp;|&nbsp; 14:02:45 CEST</div>
<div class="t" style="left:1856.00px;top:494.15px;font-size:15px;line-height:18.00px;font-weight:700;color:#232f54;letter-spacing:-0.524px;">Action required for a task on www.verifytest123.com</div>
<div class="t" style="left:1856.00px;top:522.25px;font-size:11.5px;line-height:13.80px;font-weight:400;color:#232f54;letter-spacing:0.012px;">Complete a task linked to an <a>ongoing incident</a> to resolve it.</div>
<div class="t" style="left:1856.00px;top:546.05px;font-size:11.5px;line-height:13.80px;font-weight:400;color:#6a7086;letter-spacing:0.041px;">Incident ID: B47O0REFTY3XVX6J</div>
<div class="t" style="left:1856.00px;top:568.55px;font-size:11.5px;line-height:13.80px;font-weight:400;color:#6a7086;letter-spacing:0.081px;">Task Detected: 06/16/2025 &nbsp;|&nbsp; 14:02:45 CEST</div>
<div class="t" style="left:1856.00px;top:610.20px;font-size:15px;line-height:18.00px;font-weight:700;color:#232f54;letter-spacing:-0.535px;">Action required for a task on www.clik2trk.com</div>
<div class="t" style="left:1856.00px;top:638.30px;font-size:11.5px;line-height:13.80px;font-weight:400;color:#232f54;letter-spacing:0.012px;">Complete a task linked to an <a>ongoing incident</a> to resolve it.</div>
<div class="t" style="left:1856.00px;top:662.10px;font-size:11.5px;line-height:13.80px;font-weight:400;color:#6a7086;letter-spacing:0.111px;">Incident ID:</div>
<div class="t" style="left:1856.00px;top:684.60px;font-size:11.5px;line-height:13.80px;font-weight:400;color:#6a7086;letter-spacing:0.081px;">Task Detected: 06/16/2025 &nbsp;|&nbsp; 14:02:45 CEST</div>
<div class="t" style="left:1856.00px;top:726.25px;font-size:15px;line-height:18.00px;font-weight:700;color:#232f54;letter-spacing:-0.514px;">Action required for a task on test-shared-t2.clqtrk.com</div>
<div class="t" style="left:1856.00px;top:754.35px;font-size:11.5px;line-height:13.80px;font-weight:400;color:#232f54;letter-spacing:0.012px;">Complete a task linked to an <a>ongoing incident</a> to resolve it.</div>
<div class="t" style="left:1856.00px;top:778.15px;font-size:11.5px;line-height:13.80px;font-weight:400;color:#6a7086;letter-spacing:0.111px;">Incident ID:</div>
<div class="t" style="left:1856.00px;top:800.65px;font-size:11.5px;line-height:13.80px;font-weight:400;color:#6a7086;letter-spacing:0.081px;">Task Detected: 06/16/2025 &nbsp;|&nbsp; 14:02:45 CEST</div>
<div class="t" style="left:1856.00px;top:842.30px;font-size:15px;line-height:18.00px;font-weight:700;color:#232f54;letter-spacing:-0.522px;">Action required for a task on www.serve-eflow-test.com</div>
<div class="t" style="left:1856.00px;top:870.40px;font-size:11.5px;line-height:13.80px;font-weight:400;color:#232f54;letter-spacing:0.074px;">Complete <a>a task</a> to prevent a future incident.</div>
<div class="t" style="left:1856.00px;top:894.20px;font-size:11.5px;line-height:13.80px;font-weight:400;color:#6a7086;letter-spacing:0.017px;">Task ID: X0LAC9M7GTXGY491</div>
<div class="t" style="left:1856.00px;top:916.70px;font-size:11.5px;line-height:13.80px;font-weight:400;color:#6a7086;letter-spacing:0.081px;">Task Detected: 06/16/2025 &nbsp;|&nbsp; 14:02:45 CEST</div>
<div class="t" style="left:1856.00px;top:958.35px;font-size:15px;line-height:18.00px;font-weight:700;color:#232f54;letter-spacing:-0.535px;">Action required for a task on www.clik2trk.com</div>
<div class="t" style="left:1856.00px;top:986.45px;font-size:11.5px;line-height:13.80px;font-weight:400;color:#232f54;letter-spacing:0.074px;">Complete <a>a task</a> to prevent a future incident.</div>
<div class="t" style="left:1856.00px;top:1010.25px;font-size:11.5px;line-height:13.80px;font-weight:400;color:#6a7086;letter-spacing:-0.063px;">Task ID: 0Y13L1KL8L80Z5JY</div>
<div class="t" style="left:1856.00px;top:1032.75px;font-size:11.5px;line-height:13.80px;font-weight:400;color:#6a7086;letter-spacing:0.081px;">Task Detected: 06/16/2025 &nbsp;|&nbsp; 14:02:45 CEST</div>
</div></div></body></html>
